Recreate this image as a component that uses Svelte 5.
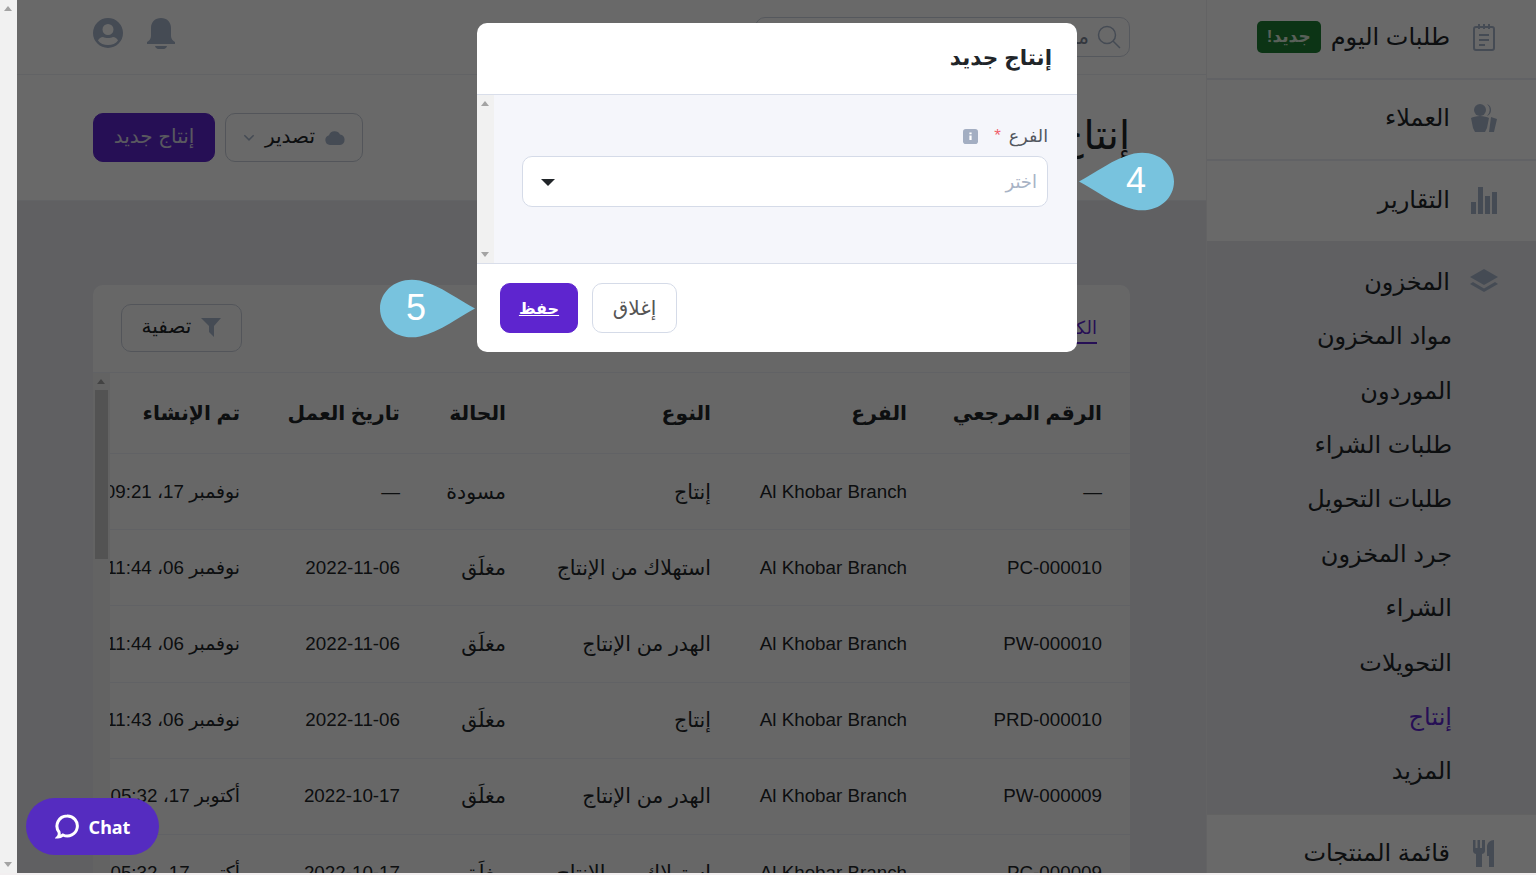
<script>
  const rows = [
    ['—', 'إنتاج', 'مسودة', '—', 'نوفمبر 17، 09:21'],
    ['PC-000010', 'استهلاك من الإنتاج', 'مغلَق', '2022-11-06', 'نوفمبر 06، 11:44'],
    ['PW-000010', 'الهدر من الإنتاج', 'مغلَق', '2022-11-06', 'نوفمبر 06، 11:44'],
    ['PRD-000010', 'إنتاج', 'مغلَق', '2022-11-06', 'نوفمبر 06، 11:43'],
    ['PW-000009', 'الهدر من الإنتاج', 'مغلَق', '2022-10-17', 'أكتوبر 17، 05:32'],
    ['PC-000009', 'استهلاك من الإنتاج', 'مغلَق', '2022-10-17', 'أكتوبر 17، 05:32']
  ];
  const heads = ['الرقم المرجعي', 'الفرع', 'النوع', 'الحالة', 'تاريخ العمل', 'تم الإنشاء'];
  const stock = ['مواد المخزون', 'الموردون', 'طلبات الشراء', 'طلبات التحويل', 'جرد المخزون', 'الشراء', 'التحويلات', 'إنتاج', 'المزيد'];
</script>

<div class="page" dir="rtl">
  <aside class="sidebar">
    <div class="nav-item first">
      <svg class="nav-icon" viewBox="0 0 24 28" fill="none" stroke="#a8b6cc" stroke-width="2"><rect x="2" y="4" width="20" height="23" rx="2"/><path d="M7 1v5M12 1v5M17 1v5M7 12h10M7 17h10M7 22h6"/></svg>
      <span>طلبات اليوم</span>
      <span class="new-badge">جديد!</span>
    </div>
    <div class="nav-item second">
      <svg class="nav-icon" viewBox="0 0 28 28" fill="#a8b6cc"><circle cx="10" cy="6" r="6"/><path d="M17 0a6.500 6.500 0 0 1 0 12 8 8 0 0 0 0-12zM1 14c2-1 5-2 9-2s7 1 9 2l-2 10-2 4H5l-2-4zM21 13l6 2-3 13h-5z"/></svg>
      <span>العملاء</span>
    </div>
    <div class="nav-item last">
      <svg class="nav-icon" viewBox="0 0 28 28" fill="#a8b6cc"><path d="M1 16h5v12H1zM8 1h5v27H8zM15 10h5v18h-5zM22 6h5v22h-5z"/></svg>
      <span>التقارير</span>
    </div>
    <div class="nav-group">
      <div class="nav-item plain">
        <svg class="nav-icon" viewBox="0 0 28 26" fill="#a8b6cc"><path d="M14 0l14 8-14 8L0 8z"/><path d="M3 13l11 6.500L25 13l3 2-14 8-14-8z"/></svg>
        <span>المخزون</span>
      </div>
      {#each stock as item}
        <a class="sub-item" class:active={item === 'إنتاج'} href="#top">{item}</a>
      {/each}
    </div>
    <div class="nav-item plain menu">
      <svg class="nav-icon" viewBox="0 0 24 28" fill="#a8b6cc"><path d="M1 1h2.500v8h2V1h2.500v8h2V1H13v11c0 2-2 3-3 3v13H4V15c-1 0-3-1-3-3zM22 1v27h-5V17h-2V8c0-4 3-7 7-7z"/></svg>
      <span>قائمة المنتجات</span>
    </div>
  </aside>

  <main class="main">
    <header class="topbar">
      <div class="search">
        <svg viewBox="0 0 24 24" fill="none" stroke="#a8b6cc" stroke-width="1.500"><circle cx="10" cy="10" r="8.500"/><path d="M16 16l7 7"/></svg>
        <span>ماذا تبحث عنه</span>
      </div>
      <div class="top-icons">
        <svg class="bell" viewBox="0 0 28 31" fill="#a8b6cc"><path d="M14 0c6 0 10 4 10 10v8c0 3 2 5 4 6v2H0v-2c2-1 4-3 4-6v-8C4 4 8 0 14 0z"/><path d="M8 28h12a6 3.500 0 0 1-12 0z"/></svg>
        <svg class="user" viewBox="0 0 30 30" fill="#a8b6cc"><path fill-rule="evenodd" d="M15 0a15 15 0 1 1 0 30 15 15 0 0 1 0-30zM15 6a5.500 5.500 0 1 0 0 11 5.500 5.500 0 0 0 0-11zM5 22.500c2 3 6 4.500 10 4.500s8-1.500 10-4.500c-1-2-3-3.500-5-3.500-1.500.700-3 1-5 1s-3.500-.300-5-1c-2 0-4 1.500-5 3.500z"/></svg>
      </div>
    </header>

    <div class="titlebar">
      <h1>إنتاج</h1>
      <div class="actions">
        <button class="btn export">
          <svg class="cloud" viewBox="0 0 20 15" fill="#a8b6cc"><path d="M5 15a5 5 0 0 1-1-9.800A6 6 0 0 1 15 4.500a5.300 5.300 0 0 1 0 10.500z"/></svg>
          تصدير
          <svg class="chev" viewBox="0 0 10 6" fill="none" stroke="#a8b6cc" stroke-width="1.300"><path d="M1 1l4 4 4-4"/></svg>
        </button>
        <button class="btn primary">إنتاج جديد</button>
      </div>
    </div>

    <section class="card">
      <div class="card-head">
        <span class="tab">الكل</span>
        <button class="btn filter">
          <svg viewBox="0 0 20 19" fill="#a8b6cc"><path d="M0 0h20l-7 8v11l-5-5V8z"/></svg>
          تصفية
        </button>
      </div>
      <div class="table-wrap">
        <div class="table">
          <div class="tr th">
            {#each heads as head}<div>{head}</div>{/each}
          </div>
          {#each rows as row}
            <div class="tr">
              <div>{row[0]}</div>
              <div>Al Khobar Branch</div>
              <div class="ar">{row[1]}</div>
              <div class="ar">{row[2]}</div>
              <div>{row[3]}</div>
              <div>{row[4]}</div>
            </div>
          {/each}
        </div>
        <div class="vscroll inner">
          <i class="up"></i><b></b><i class="down"></i>
        </div>
      </div>
    </section>
  </main>

  <div class="vscroll outer"><i class="up"></i><i class="down"></i></div>

  <div class="overlay"></div>

  <div class="modal">
    <div class="modal-head">إنتاج جديد</div>
    <div class="modal-body">
      <div class="form">
        <div class="label">
          <span>الفرع</span><em>*</em>
          <svg viewBox="0 0 16 16"><rect width="16" height="16" rx="3" fill="#a3aec2"/><path d="M6.500 7h3v6h-3zM6.500 3h3v2.500h-3z" fill="#fff" transform="translate(1.600 1.200) scale(.8)"/></svg>
        </div>
        <div class="select">
          <span>اختر</span>
          <i></i>
        </div>
      </div>
      <div class="vscroll modal-scroll"><i class="up"></i><i class="down"></i></div>
    </div>
    <div class="modal-foot">
      <button class="mbtn">إغلاق</button>
      <button class="mbtn save">حفظ</button>
    </div>
  </div>

  <div class="callout four">
    <svg viewBox="0 0 95 59"><path d="M0 29.500C15 22 35 6 55 1.500 77-3 95 11 95 29.500S77 62 55 57.500C35 53 15 37 0 29.500z" fill="#78c3de"/></svg>
    <span>4</span>
  </div>
  <div class="callout five">
    <svg viewBox="0 0 95 59"><path d="M95 29.500C80 22 60 6 40 1.500 18-3 0 11 0 29.500S18 62 40 57.500C60 53 80 37 95 29.500z" fill="#78c3de"/></svg>
    <span>5</span>
  </div>

  <div class="chat">
    <svg viewBox="0 0 24 25" fill="none" stroke="#fff" stroke-width="3"><path d="M12 2a10 10 0 1 1-4 19c-2 1.500-4 2-5 2 1-1 1.500-3 1-5A10 10 0 0 1 12 2z"/></svg>
    <span>Chat</span>
  </div>
</div>

<style>
  :global(body) {
    margin: 0;
    background: #f2eff0;
  }

  .page {
    position: relative;
    display: flex;
    height: 873px;
    overflow: hidden;
    background: #e8eaef;
    color: #212529;
    font-family: "Liberation Sans", "DejaVu Sans", sans-serif;
  }

  .sidebar {
    width: 330px;
    flex: none;
    background: #fff;
    border-inline-end: 1px solid #f0f0f2;
    box-sizing: border-box;
  }

  .nav-item {
    display: flex;
    align-items: center;
    height: 80px;
    padding-inline-start: 38px;
    font-size: 24px;
    border-bottom: 2px solid #eceef5;
    box-sizing: border-box;
  }

  .nav-item.first {
    padding-bottom: 4px;
  }

  .nav-item.second {
    height: 81px;
    padding-bottom: 3px;
  }

  .nav-item.plain {
    border: 0;
    height: 54px;
  }

  .nav-item.last {
    border: 0;
    padding-bottom: 2px;
  }

  .nav-icon {
    width: 28px;
    height: 28px;
    margin-inline-end: 20px;
    flex: none;
  }

  .new-badge {
    margin-inline-start: 10px;
    padding: 5px 10px;
    font-size: 17px;
    font-weight: bold;
    color: #d9ead9;
    background: #1e7e34;
    border-radius: 5px;
    line-height: 22px;
  }

  .nav-group {
    background: #e8eaef;
    padding: 14px 0 15px;
    border-bottom: 1px solid #eeeeee;
  }

  .sub-item {
    display: flex;
    align-items: center;
    height: 54.400px;
    padding-inline-start: 84px;
    font-size: 24px;
    color: #212529;
    text-decoration: none;
  }

  .sub-item.active {
    color: #5e25cf;
  }

  .menu {
    padding-top: 16px;
    height: 60px !important;
  }

  .main {
    flex: 1;
    min-width: 0;
  }

  .topbar {
    display: flex;
    align-items: center;
    justify-content: space-between;
    height: 74px;
    padding: 0 76px;
    background: #fff;
    border-bottom: 1px solid #eef0f4;
  }

  .search {
    display: flex;
    align-items: center;
    gap: 8px;
    width: 375px;
    height: 40px;
    padding: 0 8px;
    box-sizing: border-box;
    border: 1px solid #cfd5e2;
    border-radius: 10px;
    color: #7d8797;
    font-size: 20px;
  }

  .search svg {
    width: 24px;
    height: 24px;
  }

  .top-icons {
    display: flex;
    align-items: center;
    gap: 24px;
    transform: translateY(-4px);
  }

  .bell {
    width: 28px;
    height: 31px;
  }

  .user {
    width: 30px;
    height: 30px;
  }

  .titlebar {
    display: flex;
    align-items: center;
    justify-content: space-between;
    height: 125px;
    padding: 0 76px;
    background: #fff;
    border-bottom: 1px solid #eef0f4;
  }

  h1 {
    margin: 0 0 6px;
    font-size: 40px;
    font-weight: 400;
  }

  .actions {
    display: flex;
    gap: 10px;
  }

  .btn {
    display: flex;
    align-items: center;
    height: 49px;
    padding: 0 0 3px;
    gap: 10px;
    background: #fff;
    border: 1px solid #c9cfdb;
    border-radius: 10px;
    font: inherit;
    font-size: 20px;
    color: #212529;
    box-sizing: border-box;
  }

  .btn svg {
    margin-top: 3px;
  }

  .btn.export {
    width: 138px;
    justify-content: center;
  }

  .btn.primary {
    width: 122px;
    justify-content: center;
    background: #5e25cf;
    border-color: #5e25cf;
    color: #d8d8e6;
  }

  .cloud {
    width: 20px;
    height: 15px;
  }

  .chev {
    width: 12px;
    height: 7px;
  }

  .card {
    margin: 84px 76px 0;
    background: #fbfbfb;
    border-radius: 10px 10px 0 0;
  }

  .card-head {
    display: flex;
    align-items: center;
    justify-content: space-between;
    height: 88px;
    box-sizing: border-box;
    padding: 0 33px 2px 28px;
    border-bottom: 1px solid #eceef5;
  }

  .tab {
    padding: 0 0 3px;
    color: #5e25cf;
    font-size: 18px;
    border-bottom: 2px solid #5e25cf;
    transform: translateY(3px);
  }

  .btn.filter {
    width: 121px;
    height: 48px;
    justify-content: center;
    background: transparent;
  }

  .btn.filter svg {
    width: 20px;
    height: 19px;
  }

  .table-wrap {
    display: flex;
  }

  .table {
    flex: 1;
    min-width: 0;
    overflow: hidden;
  }

  .tr {
    display: grid;
    grid-template-columns: 195px 196px 205px 106px 160px 158px;
    height: 76.200px;
    align-items: center;
    font-size: 18.800px;
    border-bottom: 1px solid #eceef5;
    box-sizing: border-box;
  }

  .tr > div {
    padding-inline-start: 28px;
    white-space: nowrap;
  }

  .tr > .ar {
    font-size: 20.500px;
  }

  .th {
    height: 81px;
    font-size: 20.300px;
    font-weight: bold;
  }

  .vscroll {
    position: relative;
    width: 17px;
    flex: none;
    background: #f1f1f1;
  }

  .vscroll i {
    position: absolute;
    left: 4px;
    width: 0;
    height: 0;
    border-inline: 4px solid transparent;
  }

  .vscroll .up {
    top: 6px;
    border-bottom: 5px solid #a3a3a3;
  }

  .vscroll .down {
    bottom: 6px;
    border-top: 5px solid #a3a3a3;
  }

  .vscroll b {
    display: block;
    margin: 17px 2px 0 2px;
    height: 169px;
    background: #c1c1c1;
    opacity: .8;
  }

  .overlay {
    position: absolute;
    inset: 0 0 0 17px;
    background: rgba(0, 0, 0, .59);
  }

  .outer {
    z-index: 1;
  }

  .modal {
    position: absolute;
    left: 477px;
    top: 23px;
    width: 600px;
    height: 329px;
    display: flex;
    flex-direction: column;
    background: #fff;
    border-radius: 10px;
    overflow: hidden;
  }

  .modal-head {
    height: 71px;
    line-height: 71px;
    padding-inline-start: 25px;
    font-size: 21.500px;
    font-weight: bold;
    border-bottom: 1px solid #d9deea;
    flex: none;
  }

  .modal-body {
    flex: 1;
    display: flex;
    background: #f5f6fb;
    border-bottom: 1px solid #d9deea;
  }

  .form {
    flex: 1;
    padding: 28px 29px 0 28px;
  }

  .modal-scroll {
    align-self: stretch;
  }

  .label {
    display: flex;
    align-items: center;
    height: 26px;
    font-size: 17.500px;
    color: #52565e;
  }

  .label em {
    margin-inline-start: 8px;
    color: #f0616d;
    font-style: normal;
    font-size: 17px;
  }

  .label svg {
    width: 15px;
    height: 15px;
    margin-inline-start: 16px;
  }

  .select {
    display: flex;
    align-items: center;
    justify-content: space-between;
    height: 51px;
    margin-top: 7px;
    padding: 0 10px 0 18px;
    box-sizing: border-box;
    background: #fff;
    border: 1px solid #d5dbe8;
    border-radius: 10px;
    color: #a8b3c5;
    font-size: 18px;
  }

  .select i {
    width: 0;
    height: 0;
    margin-top: 2px;
    border-inline: 7px solid transparent;
    border-top: 7px solid #212529;
  }

  .modal-foot {
    height: 88px;
    flex: none;
    display: flex;
    justify-content: flex-end;
    gap: 14px;
    padding: 19px 23px;
    box-sizing: border-box;
  }

  .mbtn {
    height: 50px;
    width: 85px;
    background: #fff;
    border: 1px solid #d5dbe8;
    border-radius: 10px;
    font: inherit;
    font-size: 20px;
    color: #555;
  }

  .mbtn.save {
    width: 78px;
    background: #5e25cf;
    border-color: #5e25cf;
    color: #fff;
    font-size: 16px;
    font-weight: bold;
    text-decoration: underline;
  }

  .callout {
    position: absolute;
    width: 95px;
    height: 59px;
  }

  .callout svg {
    position: absolute;
    inset: 0;
  }

  .callout span {
    position: absolute;
    top: 9px;
    color: #fff;
    font-size: 36px;
    line-height: 40px;
  }

  .four {
    left: 1079px;
    top: 152px;
  }

  .four span {
    left: 47px;
  }

  .five {
    left: 380px;
    top: 279px;
  }

  .five span {
    left: 26px;
  }

  .chat {
    position: absolute;
    left: 26px;
    top: 798px;
    width: 133px;
    height: 57px;
    display: flex;
    flex-direction: row-reverse;
    align-items: center;
    justify-content: center;
    gap: 10px;
    background: #552cc0;
    border-radius: 29px;
    color: #fff;
    font-family: "Noto Sans", sans-serif;
    font-size: 18px;
    font-weight: bold;
  }

  .chat svg {
    width: 24px;
    height: 25px;
  }
</style>
